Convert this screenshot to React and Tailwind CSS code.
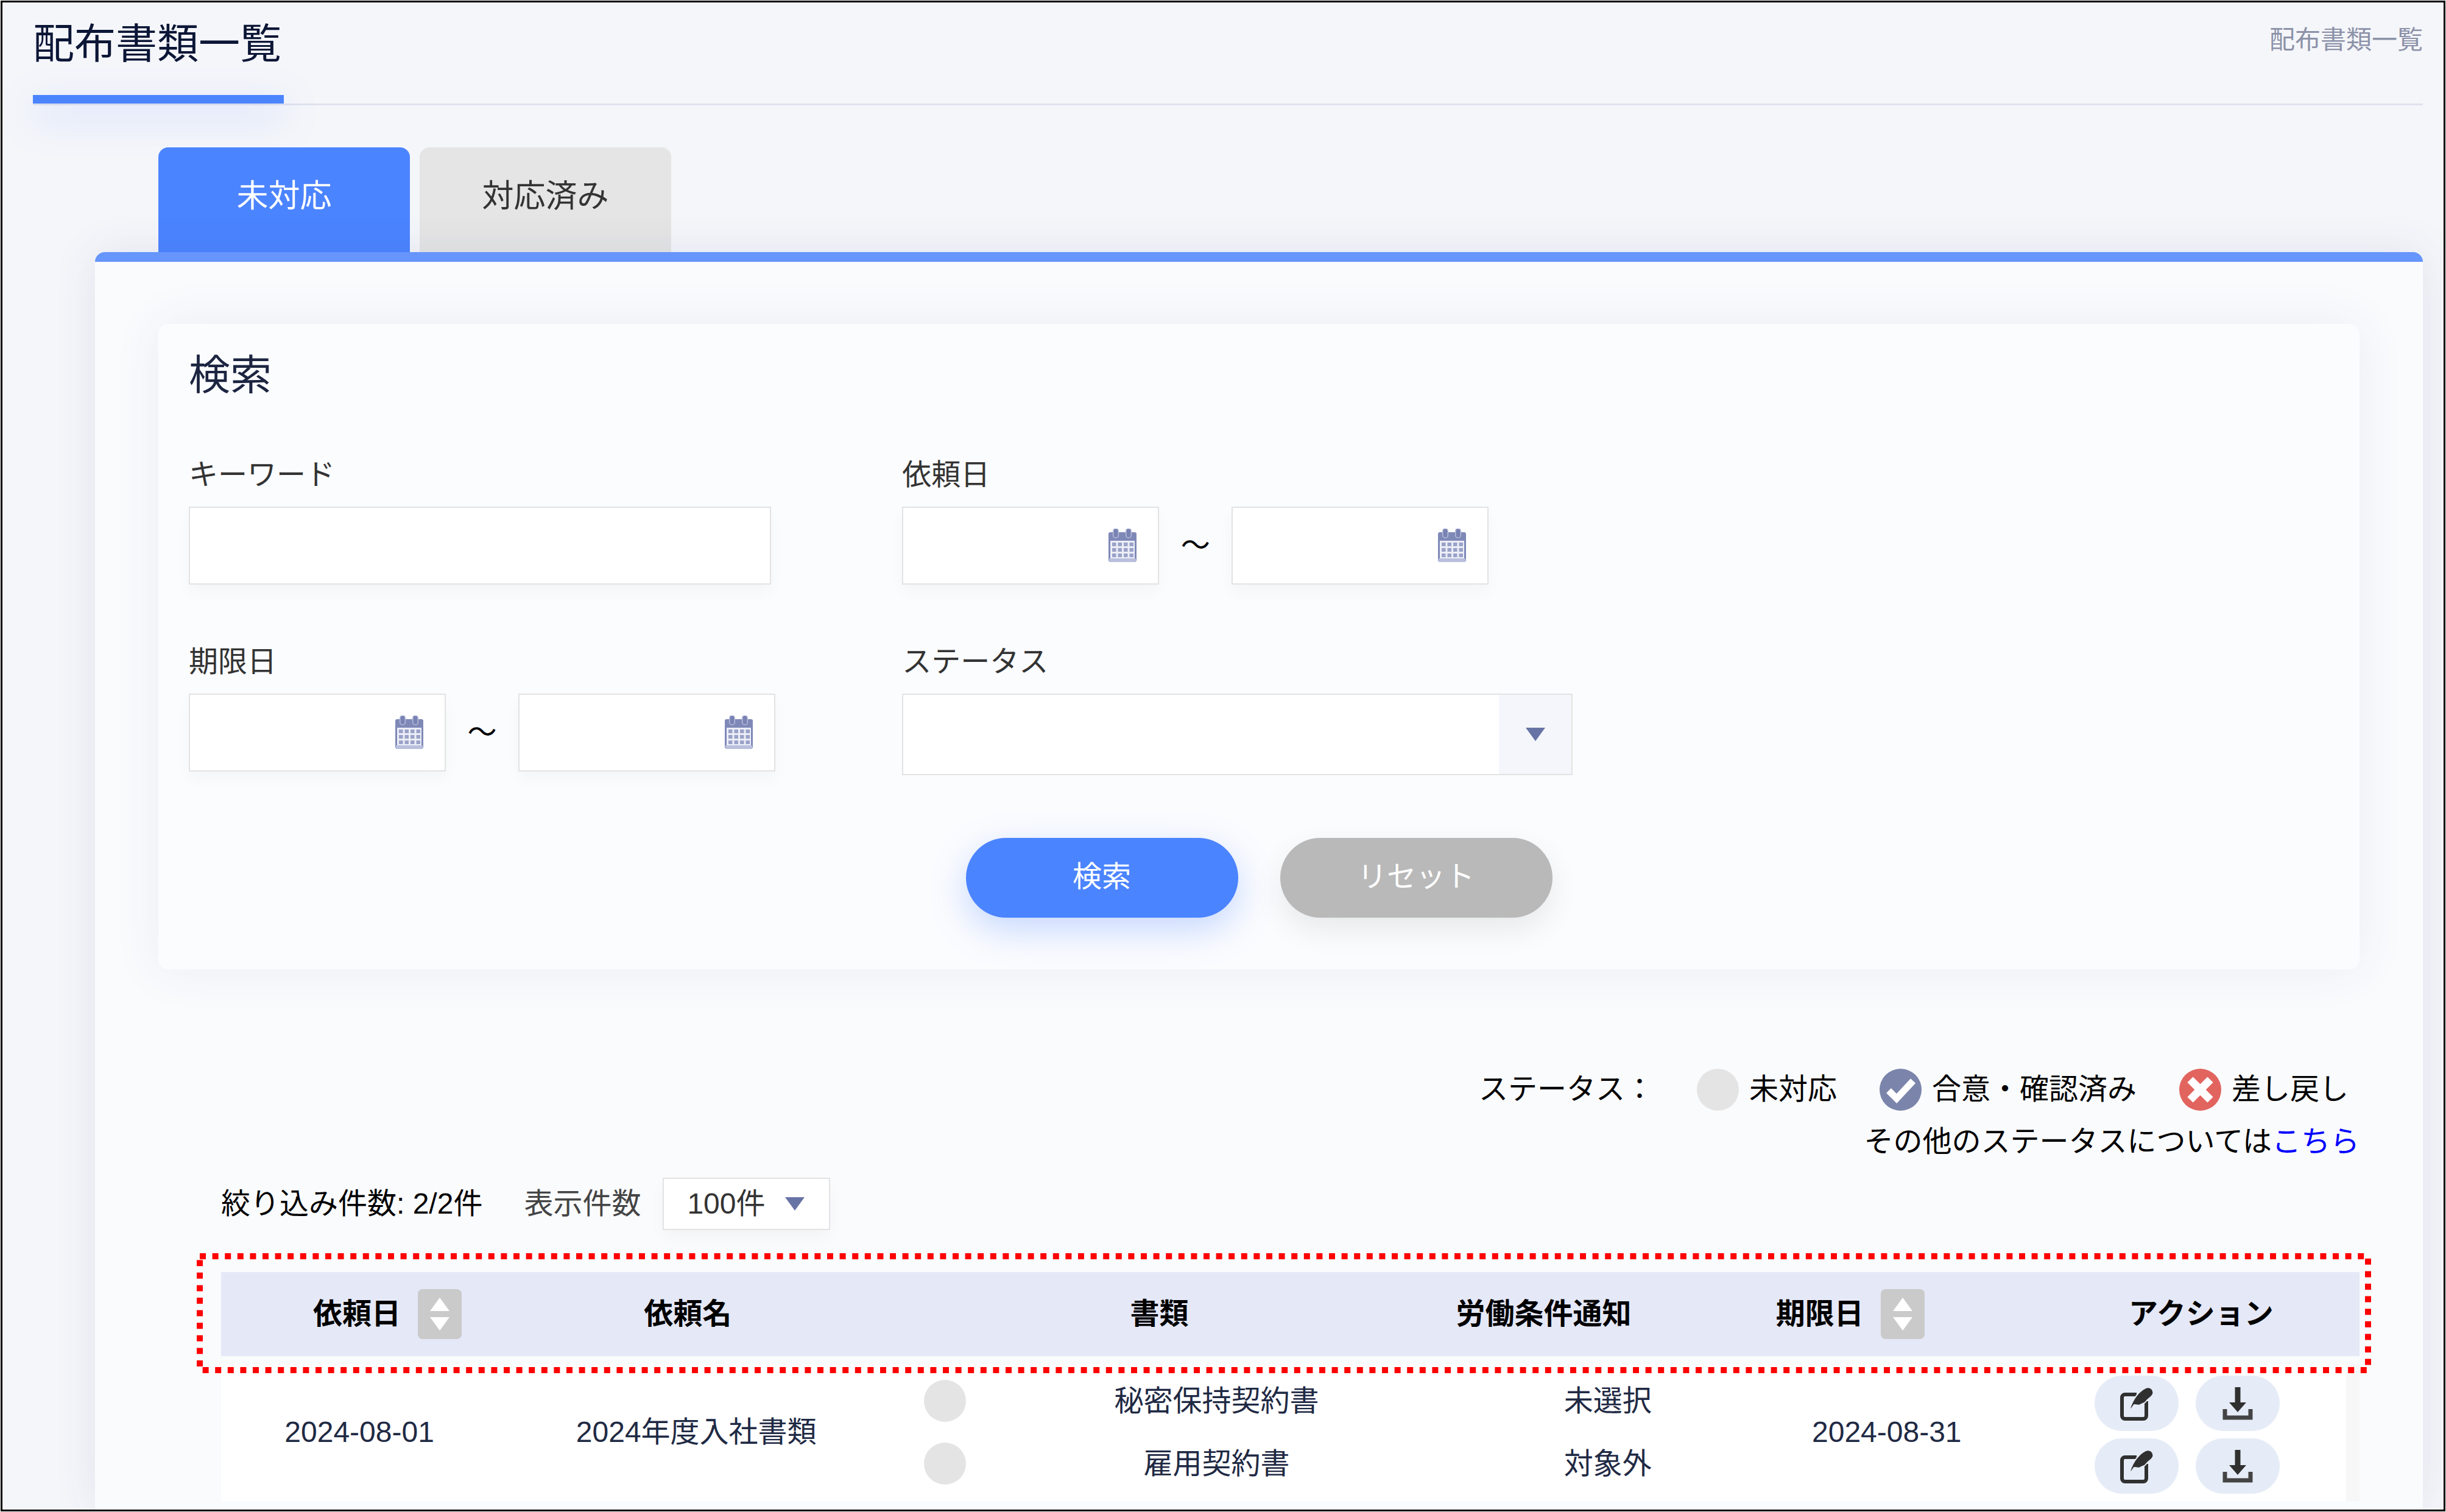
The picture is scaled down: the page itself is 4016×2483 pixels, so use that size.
const legend = [
  { label: '未対応', kind: 'pending' },
  { label: '合意・確認済み', kind: 'agreed' },
  { label: '差し戻し', kind: 'rejected' },
]

const documents = [
  { name: '秘密保持契約書', condition: '未選択' },
  { name: '雇用契約書', condition: '対象外' },
]

const inputClass =
  'bg-white border-2 border-[#e3e3e3] shadow-[0_12px_24px_rgba(0,0,0,0.03)] text-5xl text-[#333] outline-none'

function StatusIcon({ kind }) {
  if (kind === 'agreed') {
    return (
      <svg viewBox="0 0 69 69" className="size-[69px] shrink-0" aria-hidden="true">
        <circle cx="34.5" cy="34.5" r="34.5" fill="#7b85ab" />
        <path d="M15 36l13 13 27-29" fill="none" stroke="#fff" strokeWidth="11" />
      </svg>
    )
  }
  if (kind === 'rejected') {
    return (
      <svg viewBox="0 0 69 69" className="size-[69px] shrink-0" aria-hidden="true">
        <circle cx="34.5" cy="34.5" r="34.5" fill="#e2645f" />
        <path d="M18 18l33 33M51 18l-33 33" fill="none" stroke="#fff" strokeWidth="13" />
      </svg>
    )
  }
  return <span className="block size-[69px] shrink-0 rounded-full bg-[#e4e4e4]" />
}

function CalendarIcon() {
  return (
    <svg viewBox="0 0 48 56" className="absolute right-9 top-9 h-14 w-12 pointer-events-none" aria-hidden="true">
      <path d="M4 6h40a3 3 0 0 1 3 3v42a4 4 0 0 1-4 4H5a4 4 0 0 1-4-4V9a3 3 0 0 1 3-3z" fill="#7f89b8" />
      <path d="M4 20h40v29H4z" fill="#eceef7" />
      <path d="M2 49h44v3a3 3 0 0 1-3 3H5a3 3 0 0 1-3-3z" fill="#b9bfdc" />
      <path d="M13 4v7M34 4v7" stroke="#b9bfdc" strokeWidth="10" strokeLinecap="round" />
      <path d="M13 4v7M34 4v7" stroke="#7882b3" strokeWidth="7" strokeLinecap="round" />
      <path d="M7 26h35M7 35h35M7 44h35" stroke="#9aa2c9" strokeWidth="6" strokeDasharray="6.5 3" />
    </svg>
  )
}

function EditIcon() {
  return (
    <svg viewBox="0 0 56 56" className="size-14" aria-hidden="true">
      <path d="M28 13H9a5 5 0 0 0-5 5v30a5 5 0 0 0 5 5h30a5 5 0 0 0 5-5V24" fill="none" stroke="#303030" strokeWidth="6" />
      <path d="M17 36C22 20 32 7 43 2c7-3 14 3 12 10-2 6-8 7-12 13-2 3-6 3-9 5-3 2-8 0-10 0l-5 7z" fill="#303030" stroke="#e6ecf7" strokeWidth="2" />
    </svg>
  )
}

function DownloadIcon() {
  return (
    <svg viewBox="0 0 56 56" className="size-14" aria-hidden="true">
      <path d="M28 1v27" stroke="#303030" strokeWidth="9" />
      <path d="M14 26h28L28 42z" fill="#303030" />
      <path d="M7 37v14h42V37" fill="none" stroke="#444" strokeWidth="7" />
    </svg>
  )
}

function Triangle({ className = '' }) {
  return (
    <svg viewBox="0 0 32 22" className={`h-[22px] w-8 pointer-events-none ${className}`} aria-hidden="true">
      <path d="M0 0h32L16 22z" fill="#6873a5" />
    </svg>
  )
}

function SortButton({ label }) {
  return (
    <button type="button" aria-label={label} className="flex h-[82px] w-[72px] items-center justify-center rounded-lg bg-[#cacaca]">
      <svg viewBox="0 0 32 54" className="h-[54px] w-8" aria-hidden="true">
        <path d="M0 22L16 0l16 22zM0 32h32L16 54z" fill="#fff" />
      </svg>
    </button>
  )
}

function DateField({ id, label }) {
  return (
    <span className="relative block">
      <input id={id} type="text" aria-label={label} className={`${inputClass} block h-32 w-[422px] pl-6 pr-24`} />
      <CalendarIcon />
    </span>
  )
}

function DateRange({ id, label }) {
  return (
    <div>
      <label htmlFor={`${id}-from`} className="mb-[22px] block text-5xl leading-[60px] text-[#333]">{label}</label>
      <div className="flex items-center">
        <DateField id={`${id}-from`} />
        <span className="w-[119px] text-center text-5xl text-black">～</span>
        <DateField id={`${id}-to`} label={`${label} 終了`} />
      </div>
    </div>
  )
}

function SearchCard() {
  return (
    <form className="rounded-2xl bg-[#fbfcfe] px-[50px] pt-11 pb-[85px] shadow-[0_0_80px_rgba(60,70,130,0.08)]">
      <h2 className="text-[68px] leading-20 text-[#1c2540]">検索</h2>
      <div className="mt-[94px] grid grid-cols-3 gap-y-[97px]">
        <div>
          <label htmlFor="keyword" className="mb-[22px] block text-5xl leading-[60px] text-[#333]">キーワード</label>
          <input id="keyword" type="text" className={`${inputClass} block h-32 w-[956px] px-6`} />
        </div>
        <DateRange id="request" label="依頼日" />
        <div />
        <DateRange id="due" label="期限日" />
        <div>
          <label htmlFor="status" className="mb-[22px] block text-5xl leading-[60px] text-[#333]">ステータス</label>
          <div className="relative w-[1101px]">
            <select id="status" className="block h-[134px] w-full appearance-none border-2 border-[#e3e3e3] bg-white px-6 text-5xl outline-none" />
            <span className="pointer-events-none absolute inset-y-0.5 right-0.5 flex w-[119px] items-center justify-center bg-[#f4f6fb]">
              <Triangle />
            </span>
          </div>
        </div>
      </div>
      <div className="mt-[103px] flex justify-center gap-[69px]">
        <button type="submit" className="h-[131px] w-[447px] rounded-full bg-[#4b84ff] pb-1 text-5xl text-white shadow-[0_20px_60px_rgba(75,132,255,0.3)]">
          検索
        </button>
        <button type="reset" className="h-[131px] w-[447px] rounded-full bg-[#b9b9b9] pb-1 text-5xl text-white shadow-[0_20px_50px_rgba(0,0,0,0.08)]">
          リセット
        </button>
      </div>
    </form>
  )
}

function DocumentTable() {
  return (
    <div className="relative mt-[69px] ml-[103px]">
      <table className="block w-full text-center text-5xl">
        <thead className="block bg-[#e5e8f7] text-black">
          <tr className="grid h-[138px] grid-cols-[546fr_440fr_94fr_920fr_342fr_664fr_504fr] items-center whitespace-nowrap">
            <th>
              <span className="flex items-center justify-center gap-7">
                依頼日
                <SortButton label="依頼日で並び替え" />
              </span>
            </th>
            <th>依頼名</th>
            <th />
            <th>書類</th>
            <th>労働条件通知</th>
            <th>
              <span className="flex items-center justify-center gap-7">
                期限日
                <SortButton label="期限日で並び替え" />
              </span>
            </th>
            <th className="pr-4">アクション</th>
          </tr>
        </thead>
        <tbody className="mt-3.5 grid grid-cols-[454fr_652fr_164fr_728fr_556fr_360fr_574fr] grid-rows-[103px_103px] items-center whitespace-nowrap border-r-[22px] border-[#f8f7f7] bg-white pt-2 pb-2.5 text-[#1f2a44]">
          {documents.map((doc, i) => (
            <tr key={doc.name} className="contents">
              {i === 0 && <td rowSpan={2} className="row-span-2">2024-08-01</td>}
              {i === 0 && <td rowSpan={2} className="row-span-2">2024年度入社書類</td>}
              <td className="flex justify-center"><StatusIcon kind="pending" /></td>
              <td>{doc.name}</td>
              <td>{doc.condition}</td>
              {i === 0 && <td rowSpan={2} className="row-span-2">2024-08-31</td>}
              <td className="flex justify-center gap-7 pt-2 pl-[52px]">
                <button type="button" aria-label={`${doc.name}を開く`} className="flex h-[91px] w-[138px] items-center justify-center rounded-full bg-[#e6ecf7]">
                  <EditIcon />
                </button>
                <button type="button" aria-label={`${doc.name}をダウンロード`} className="flex h-[91px] w-[138px] items-center justify-center rounded-full bg-[#e6ecf7]">
                  <DownloadIcon />
                </button>
              </td>
            </tr>
          ))}
        </tbody>
      </table>

      {/* Callout frame around the header row */}
      <svg className="pointer-events-none absolute -top-[26px] -left-[35px] h-[187px] w-[calc(100%+49px)] overflow-visible" aria-hidden="true">
        <rect width="100%" height="100%" fill="none" stroke="#f00" strokeWidth="10" strokeDasharray="10 10.6" />
      </svg>
    </div>
  )
}

export default function App() {
  return (
    <div className="flex min-h-screen bg-white p-px font-['Liberation_Sans','Noto_Sans_CJK_JP',sans-serif]">
      <div className="flex flex-1 flex-col overflow-hidden border-[3px] border-black bg-[#f5f6fa]">
        <header className="ml-[50px] mr-[34px] flex h-[169px] justify-between border-b-[3px] border-[#dfe2ee]">
          <div className="flex flex-col justify-between">
            <h1 className="pt-7 pr-1 text-[68px] leading-20 text-[#0c1636]">配布書類一覧</h1>
            <span className="block h-3.5 bg-[#4b84ff] shadow-[0_20px_60px_rgba(75,132,255,0.35)]" />
          </div>
          <nav className="pt-8 text-[42px] leading-[60px] text-[#8c92a8]">配布書類一覧</nav>
        </header>

        <div className="mt-[69px] ml-[256px] flex gap-4" role="tablist">
          <button type="button" role="tab" aria-selected="true" className="h-[172px] w-[413px] rounded-t-2xl bg-[#4b84ff] pb-3 text-[52px] text-white">
            未対応
          </button>
          <button type="button" role="tab" aria-selected="false" className="h-[172px] w-[413px] rounded-t-2xl bg-[#e5e5e5] pb-3 text-[52px] text-[#333]">
            対応済み
          </button>
        </div>

        <main className="ml-[152px] mr-[34px] flex-1 rounded-t-2xl border-t-[16px] border-[#6695fb] bg-[#fafbfd] px-[104px] pt-[102px] shadow-[0_0_70px_rgba(60,70,130,0.1)]">
          <SearchCard />

          <div className="mt-[154px] text-right text-5xl leading-[86px] text-black">
            <div className="flex h-[86px] items-center justify-end gap-[70px] pr-[18px]">
              <span>ステータス：</span>
              {legend.map(item => (
                <span key={item.kind} className="flex items-center gap-[17px]">
                  <StatusIcon kind={item.kind} />
                  {item.label}
                </span>
              ))}
            </div>
            <p>
              その他のステータスについては<a href="#status-help" className="text-[#0000ff]">こちら</a>
            </p>
          </div>

          <div className="mt-4 ml-[103px] flex items-center text-5xl">
            <span className="text-black">絞り込み件数: 2/2件</span>
            <label htmlFor="page-size" className="ml-[68px] mr-9 text-[#444]">表示件数</label>
            <span className="relative block">
              <select id="page-size" className={`${inputClass} block h-[86px] w-[275px] appearance-none pl-[38px]`}>
                <option>100件</option>
              </select>
              <Triangle className="absolute right-[42px] top-8" />
            </span>
          </div>

          <DocumentTable />
        </main>
      </div>
    </div>
  )
}
